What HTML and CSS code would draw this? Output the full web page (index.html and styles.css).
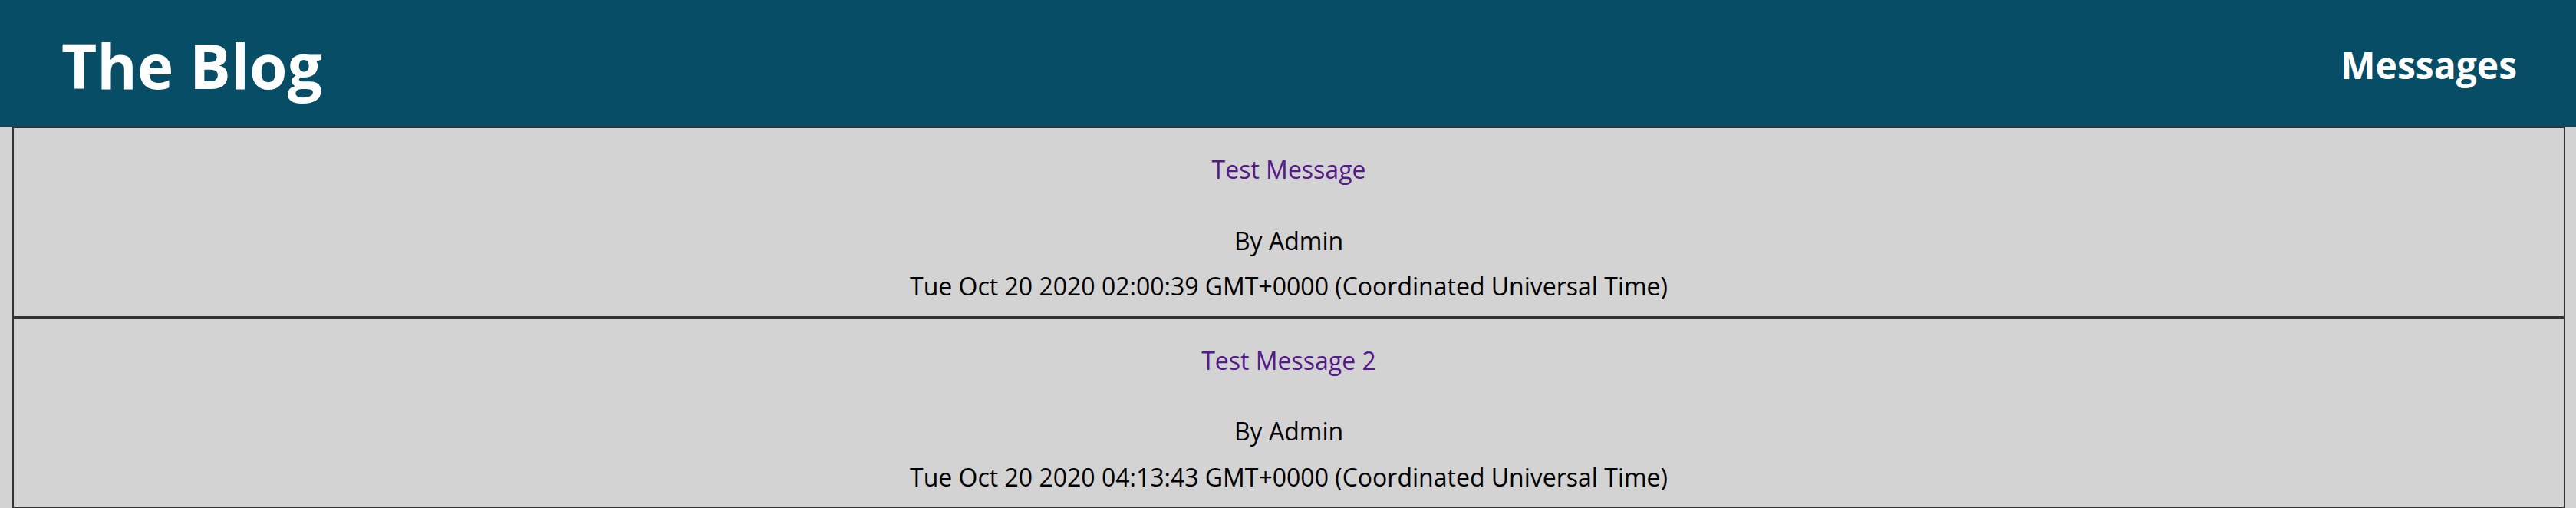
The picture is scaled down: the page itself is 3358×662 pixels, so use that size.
FILE: index.html
```html
<!DOCTYPE html>
<html lang="en">
<head>
<meta charset="utf-8">
<title>The Blog</title>
<link rel="stylesheet" href="styles.css">
</head>
<body>
<header class="site-header">
  <h1 class="brand">The Blog</h1>
  <nav class="nav"><a class="nav-link" href="#">Messages</a></nav>
</header>
<main class="messages">
  <article class="message">
    <p class="message-title"><a class="message-link" href="#">Test Message</a></p>
    <p class="message-author">By Admin</p>
    <p class="message-date">Tue Oct 20 2020 02:00:39 GMT+0000 (Coordinated Universal Time)</p>
  </article>
  <article class="message">
    <p class="message-title"><a class="message-link" href="#">Test Message 2</a></p>
    <p class="message-author">By Admin</p>
    <p class="message-date">Tue Oct 20 2020 04:13:43 GMT+0000 (Coordinated Universal Time)</p>
  </article>
</main>
</body>
</html>
```

FILE: styles.css
```css
html, body {
  margin: 0;
  padding: 0;
}
body {
  background: #d3d3d3;
  font-family: "Open Sans", "Noto Sans", sans-serif;
  color: #000;
}
.site-header {
  height: 165px;
  background: #084d66;
  display: flex;
  align-items: center;
  justify-content: space-between;
  padding: 4px 77px 0 80px;
  box-sizing: border-box;
}
.brand {
  margin: 0;
  font-size: 80px;
  font-weight: 700;
  color: #fff;
  line-height: 109px;
}
.nav-link {
  display: block;
  font-size: 48px;
  font-weight: 700;
  color: #fff;
  text-decoration: none;
  line-height: 65px;
}
.messages {
  padding: 0 14px 0 16px;
}
.message {
  border: 2px solid #333;
  text-align: center;
  padding: 0 0 17px;
}
.message p {
  font-size: 32px;
  line-height: 43.6px;
}
.message-title {
  margin: 32px 0 49px;
}
.message-link {
  color: #551a8b;
  text-decoration: none;
}
.message-author {
  margin: 0 0 16px;
}
.message-date {
  margin: 0;
}
```
